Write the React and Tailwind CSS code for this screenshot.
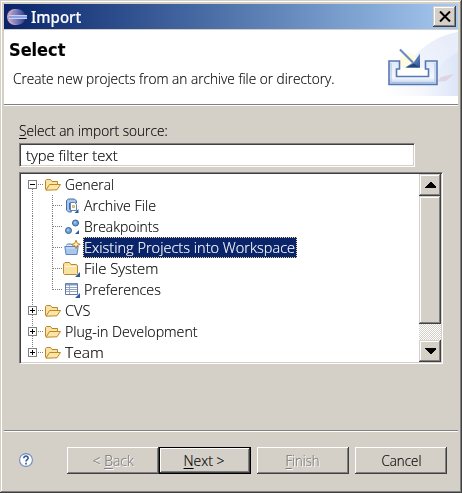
import React from "react";

const raised =
  "bg-[#d4d0c8] shadow-[inset_-1px_-1px_0_#404040,inset_1px_1px_0_#d4d0c8,inset_-2px_-2px_0_#808080,inset_2px_2px_0_#fff]";
const sunken =
  "bg-white border border-t-[#808080] border-l-[#808080] border-r-white border-b-white shadow-[inset_1px_1px_0_#404040,inset_-1px_-1px_0_#d4d0c8]";
const button =
  "flex h-[27px] w-[92px] shrink-0 items-center justify-center bg-[#d4d0c8] pb-px shadow-[inset_-1px_-1px_0_#404040,inset_1px_1px_0_#fff,inset_-2px_-2px_0_#808080]";

function EclipseLogo() {
  return (
    <svg className="ml-[3px] h-4 w-5 shrink-0" viewBox="0 0 20 16">
      <defs>
        <linearGradient id="ecl" x1="0" x2="1">
          <stop offset="0" stopColor="#b79cc8" />
          <stop offset=".4" stopColor="#7f7fc0" />
          <stop offset="1" stopColor="#2f3a88" />
        </linearGradient>
      </defs>
      <ellipse cx="8" cy="8" rx="8" ry="8" fill="#c9a3bd" />
      <ellipse cx="10.5" cy="8" rx="8" ry="7.8" fill="url(#ecl)" />
      <path d="M2 6.500h18M2 9.500h18" stroke="#c5d3f2" />
      <path d="M2 8h18" stroke="#8ba3dc" strokeWidth="2" />
    </svg>
  );
}

function Banner() {
  return (
    <svg className="mt-px h-[65px] w-[75px] shrink-0" viewBox="0 0 75 65">
      <defs>
        <linearGradient id="sky" x1="0" x2="1" y1=".9" y2=".3">
          <stop offset="0" stopColor="#fff" />
          <stop offset=".5" stopColor="#f1f4fc" />
          <stop offset="1" stopColor="#e8edfa" />
        </linearGradient>
        <linearGradient id="sky2" x1="0" x2="1">
          <stop offset="0" stopColor="#e6ecfa" stopOpacity="0" />
          <stop offset="1" stopColor="#dde5f7" />
        </linearGradient>
        <linearGradient id="tray" x1="0" x2="0" y1="0" y2="1">
          <stop offset="0" stopColor="#dfe9f8" />
          <stop offset=".7" stopColor="#f4f8fe" />
          <stop offset="1" stopColor="#b9cdea" />
        </linearGradient>
        <linearGradient id="arrow" x1="0" x2="1" y1="0" y2="1">
          <stop offset="0" stopColor="#9ab9e2" />
          <stop offset="1" stopColor="#2c5294" />
        </linearGradient>
      </defs>
      <path d="M0 65C22 40 34 8 75 1V65Z" fill="url(#sky)" />
      <path d="M75 21C60 27 50 43 40 65H75Z" fill="url(#sky2)" />
      <path d="M54 51l4-5 13-3-8 7z" fill="#d9c5d4" opacity=".6" />
      <circle cx="25" cy="30" r="8.500" fill="#fffbe0" />
      <path d="M15 37h31v8h-31z" fill="#fff" />
      <path d="M6 30h10.500v8H13.500v7.500h32V38h-3v-8H54v23.500H6z" fill="url(#tray)" stroke="#5577b4" strokeWidth="1.600" />
      <path d="M8 32v19.500h44V32" fill="none" stroke="#a9c0e2" strokeWidth="1" />
      <path d="M17 18.500l13 13" stroke="#6c8cc2" strokeWidth="2.200" />
      <path d="M37 22.500v14H22l9-5.500z" fill="url(#arrow)" />
      <path d="M23 36.500l8-4 6 4z" fill="#24467f" />
    </svg>
  );
}

function Folder() {
  return (
    <svg className="h-4 w-4 shrink-0" viewBox="0 0 16 16">
      <path d="M.5 12.500V3.500L1.500 2.500h4l1.500 2h5.500v3" fill="#f9e3a4" stroke="#b8862f" />
      <path d="M1 13.200L4.500 7.500h11L12 12.800z" fill="#fbe6a8" stroke="#c08726" strokeLinejoin="round" />
    </svg>
  );
}

function Corner() {
  return <path d="M16 11v5h-5z" fill="#2c5aa0" />;
}

function ArchiveIcon() {
  return (
    <svg className="h-4 w-4 shrink-0" viewBox="0 0 16 16">
      <path d="M2.500 2.500l2-1.500h6l2 2v2h-7v6l2 3h-3l-2-2z" fill="#a9c6e8" stroke="#426eae" />
      <path d="M6.500 4.500h4l2 2v6h-6z" fill="#fff" stroke="#5d83b7" />
      <path d="M8.500 7.500h2v2h-2z" fill="#f3df9f" stroke="#b59a4a" strokeWidth=".7" />
      <path d="M14.500 11v4h-4z" fill="#2c5aa0" />
    </svg>
  );
}

function BreakpointsIcon() {
  return (
    <svg className="h-4 w-4 shrink-0" viewBox="0 0 16 16">
      <circle cx="11.500" cy="4" r="3" fill="#6fa3d5" stroke="#326099" />
      <circle cx="4.500" cy="11.500" r="3" fill="#6fa3d5" stroke="#326099" />
      <circle cx="11" cy="3.500" r="1.200" fill="#9cc3e8" />
      <circle cx="4" cy="11" r="1.200" fill="#9cc3e8" />
      <path d="M15 11v4h-4z" fill="#2c5aa0" />
    </svg>
  );
}

function ProjectIcon() {
  return (
    <svg className="h-4 w-4 shrink-0 overflow-visible" viewBox="0 0 16 16">
      <path d="M2.500 5.500l1-1.500h4l1 1.500" fill="#cfe0f5" stroke="#5d83b7" />
      <path d="M.8 6.500h13.400l-1.200 8H2z" fill="#a9c7ea" stroke="#5d83c0" />
      <path d="M2 8h11" stroke="#d5e5f7" />
      <path d="M12 .2l1.200 3 3 1.200-3 1.200-1.200 3-1.200-3-3-1.200 3-1.200z" fill="#fff1b5" stroke="#b97a18" strokeWidth=".9" />
    </svg>
  );
}

function FileSystemIcon() {
  return (
    <svg className="-ml-px mr-px h-4 w-4 shrink-0 overflow-visible" viewBox="0 0 16 16">
      <path d="M.5 12.500V3L2 1.500h4.500L8 3.500h5l1.500 1v8l-1 1h-12z" fill="#fae2a0" stroke="#b98731" />
      <path d="M2 5.500h11" stroke="#fff6d5" />
      <path d="M17 11v5h-5z" fill="#2c5aa0" />
    </svg>
  );
}

function PreferencesIcon() {
  return (
    <svg className="h-4 w-4 shrink-0" viewBox="0 0 16 16">
      <path d="M1.500 1.500h12v11h-12z" fill="#fff" stroke="#66799c" />
      <path d="M2 2.500h11" stroke="#7e98c4" strokeWidth="2" />
      <path d="M2 5.500h11M2 7.500h11M2 9.500h11M5.500 3v9" stroke="#92a6c6" />
      <Corner />
    </svg>
  );
}

function Parent({ label, open, first, last, fit }) {
  return (
    <div className="flex h-[21px] shrink-0 items-center">
      <svg className="h-[21px] w-6 shrink-0" viewBox="0 0 24 21" shapeRendering="crispEdges">
        {!first && <path d="M11.500 0v6" stroke="#808080" strokeDasharray="1 1" />}
        {!last && <path d="M11.500 15v6" stroke="#808080" strokeDasharray="1 1" />}
        <path d="M17 10.500h6" stroke="#808080" strokeDasharray="1 1" />
        <path d="M7.500 6.500h8v8h-8z" fill="#fff" stroke="#808080" />
        <path d={open ? "M9 10.500h5" : "M9 10.500h5M11.500 8v5"} stroke="#000" />
      </svg>
      <Folder />
      <span className={`ml-1 inline-block origin-left pb-px leading-[20px] ${fit}`}>{label}</span>
    </div>
  );
}

function Child({ label, icon, last, selected, fit }) {
  return (
    <div className="flex h-[21px] shrink-0 items-center">
      <svg className="h-[21px] w-[43px] shrink-0" viewBox="0 0 43 21" shapeRendering="crispEdges">
        <path d="M11.500 0v21" stroke="#808080" strokeDasharray="1 1" />
        <path d={last ? "M31.500 0v11" : "M31.500 0v21"} stroke="#808080" strokeDasharray="1 1" />
        <path d="M32 10.500h10" stroke="#808080" strokeDasharray="1 1" />
      </svg>
      {icon}
      <span
        className={`ml-[3px] flex h-[21px] items-center pb-px pl-px ${
          selected ? "w-[214px] bg-[#0a246a] text-white outline-1 -outline-offset-1 outline-dotted outline-[#f5db95]" : ""
        }`}
      >
        <span className={`inline-block origin-left ${fit}`}>{label}</span>
      </span>
    </div>
  );
}

export default function App() {
  return (
    <div className="flex h-[493px] w-[462px] flex-col overflow-hidden whitespace-nowrap bg-[#d4d0c8] p-1 font-['Open_Sans','Noto_Sans',sans-serif] text-[15px] font-light text-black shadow-[inset_-1px_-1px_0_#404040,inset_1px_1px_0_#d4d0c8,inset_-2px_-2px_0_#808080,inset_2px_2px_0_#fff] [-webkit-text-stroke:0.15px_currentColor]">
      <header className="flex h-[25px] shrink-0 items-center bg-linear-to-r from-[#0a246a] to-[#a6caf0] pr-0.5">
        <EclipseLogo />
        <span className="ml-1 inline-block origin-left scale-x-[.94] font-['Noto_Sans',sans-serif] text-[16px] font-medium leading-5 text-white">
          Import
        </span>
        <button className={`ml-auto flex h-[21px] w-[23px] items-center justify-center ${raised}`}>
          <svg className="h-[11px] w-3" viewBox="0 0 12 11">
            <path d="M1 .5l10 10M11 .5L1 10.500" stroke="#000" strokeWidth="2" />
          </svg>
        </button>
      </header>

      <section className="mt-px flex h-[76px] shrink-0 justify-between border-b border-white bg-white">
        <div className="flex h-[75px] w-full justify-between border-b border-[#808080]">
          <div className="flex w-[379px] flex-col items-start">
            <h1 className="ml-[5px] mt-2 origin-left scale-x-[.95] font-['DejaVu_Sans',sans-serif] text-[17px] font-bold leading-6">
              Select
            </h1>
            <p className="ml-[9px] mt-[6px] origin-left scale-x-[.91] leading-5">
              Create new projects from an archive file or directory.
            </p>
          </div>
          <Banner />
        </div>
      </section>

      <main className="flex h-[324px] shrink-0 flex-col items-start pl-[15px] pt-[14px]">
        <label className="h-[23px] origin-left scale-x-[.91] leading-5">
          <u className="underline-offset-2">S</u>elect an import source:
        </label>
        <div className={`flex h-6 w-[396px] shrink-0 items-center pl-1.5 ${sunken}`}>
          <span className="inline-block origin-left scale-x-[.985]">type filter text</span>
        </div>
        <div className={`mt-[5px] flex h-48 w-[424px] shrink-0 p-px ${sunken}`}>
          <div className="flex h-[188px] flex-1 flex-col overflow-hidden">
            <Parent label="General" open first fit="scale-x-[.92]" />
            <Child label="Archive File" icon={<ArchiveIcon />} fit="scale-x-[.95]" />
            <Child label="Breakpoints" icon={<BreakpointsIcon />} fit="scale-x-[.93]" />
            <Child label="Existing Projects into Workspace" icon={<ProjectIcon />} selected fit="scale-x-[.97]" />
            <Child label="File System" icon={<FileSystemIcon />} fit="scale-x-[.99]" />
            <Child label="Preferences" icon={<PreferencesIcon />} last fit="scale-x-[.95]" />
            <Parent label="CVS" fit="scale-x-[.97]" />
            <Parent label="Plug-in Development" fit="scale-x-[.945]" />
            <Parent label="Team" last fit="scale-x-[1.04]" />
          </div>
          <div className="flex w-[22px] flex-col bg-[conic-gradient(#fff_25%,#d4d0c8_0_50%,#fff_0_75%,#d4d0c8_0)] bg-size-[2px_2px]">
            <div className={`flex h-[22px] items-center justify-center ${raised}`}>
              <svg className="h-1.5 w-[11px]" viewBox="0 0 11 6" shapeRendering="crispEdges">
                <path d="M5 0h1l5 5v1H0V5z" />
              </svg>
            </div>
            <div className={`h-32 ${raised}`} />
            <div className={`mt-auto flex h-[22px] items-center justify-center ${raised}`}>
              <svg className="h-1.5 w-[11px]" viewBox="0 0 11 6" shapeRendering="crispEdges">
                <path d="M0 0h11v1L6 6H5L0 1z" />
              </svg>
            </div>
          </div>
        </div>
      </main>

      <footer className="flex h-[59px] shrink-0 items-start border-t border-[#808080] pl-[15px] pt-4 shadow-[inset_0_1px_0_#fff]">
        <svg className="mt-1.5 h-[14px] w-[14px] shrink-0" viewBox="0 0 14 14">
          <circle cx="7" cy="7" r="6.400" fill="#fff" stroke="#6f8bbb" strokeWidth="1.100" />
          <path d="M4.800 5.200c0-3 4.500-2.600 4.300 0C9 6.600 7 6.600 7 8.500M7 9.800v1.600" fill="none" stroke="#3a5e9e" strokeWidth="1.700" />
        </svg>
        <button className={`${button} ml-[34px] text-[#808080] [text-shadow:1px_1px_0_#fff]`}>
          <span className="inline-block scale-x-[.93]">
            &lt; <u className="underline-offset-2">B</u>ack
          </span>
        </button>
        <button className={`${button} border border-black`}>
          <span className="inline-block -translate-x-px scale-x-[.93]">
            <u className="underline-offset-2">N</u>ext &gt;
          </span>
        </button>
        <button className={`${button} ml-1.5 text-[#808080] [text-shadow:1px_1px_0_#fff]`}>
          <span className="inline-block scale-x-[.87]">
            <u className="underline-offset-2">F</u>inish
          </span>
        </button>
        <button className={`${button} ml-1.5`}>
          <span className="inline-block scale-x-[.89]">Cancel</span>
        </button>
      </footer>
    </div>
  );
}
